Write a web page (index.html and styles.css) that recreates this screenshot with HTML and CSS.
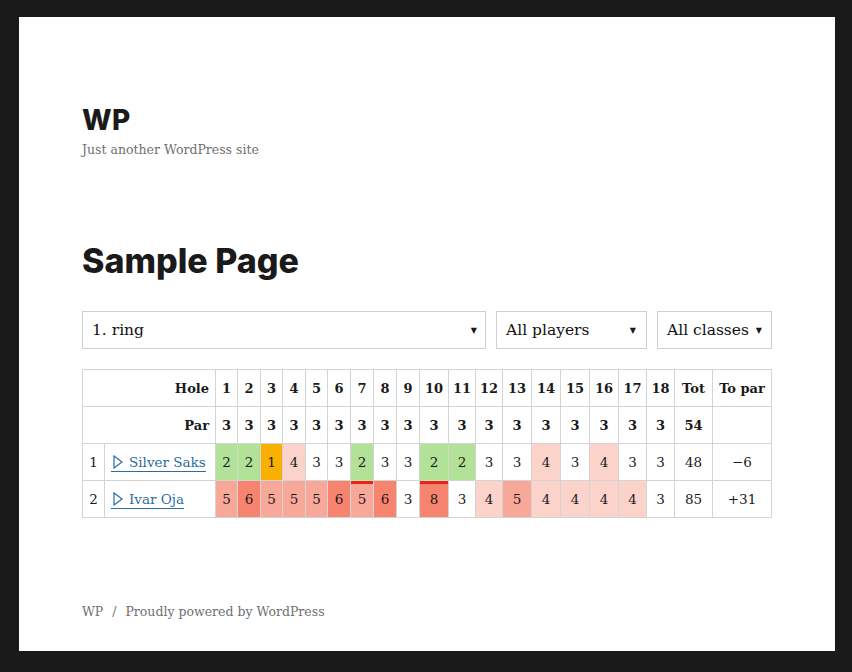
FILE: index.html
```html
<!DOCTYPE html>
<html>
<head>
<meta charset="utf-8">
<link rel="stylesheet" href="styles.css">
</head>
<body>
<div class="frame">
  <header class="site-header">
    <div class="site-title">WP</div>
    <div class="site-desc">Just another WordPress site</div>
  </header>
  <main class="content">
    <h1 class="page-title">Sample Page</h1>
    <div class="filters">
      <div class="select sel-round"><span>1. ring</span><span class="arrow">▼</span></div>
      <div class="select sel-players"><span>All players</span><span class="arrow">▼</span></div>
      <div class="select sel-classes"><span>All classes</span><span class="arrow">▼</span></div>
    </div>
    <table class="score">
      <colgroup>
        <col><col><col><col><col><col><col><col><col><col><col><col><col><col><col><col><col><col><col><col><col><col>
      </colgroup>
      <tr class="head">
        <th colspan="2" class="lbl">Hole</th>
        <th>1</th><th>2</th><th>3</th><th>4</th><th>5</th><th>6</th><th>7</th><th>8</th><th>9</th><th>10</th><th>11</th><th>12</th><th>13</th><th>14</th><th>15</th><th>16</th><th>17</th><th>18</th><th>Tot</th><th>To par</th>
      </tr>
      <tr class="head">
        <th colspan="2" class="lbl">Par</th>
        <th>3</th><th>3</th><th>3</th><th>3</th><th>3</th><th>3</th><th>3</th><th>3</th><th>3</th><th>3</th><th>3</th><th>3</th><th>3</th><th>3</th><th>3</th><th>3</th><th>3</th><th>3</th><th>54</th><th></th>
      </tr>
      <tr>
        <td class="rank">1</td>
        <td class="name"><a href="#"><svg class="tri" width="10" height="14" viewBox="0 0 10 14"><path d="M1 1 L9 7 L1 13 Z" fill="none" stroke="#2b6ca3" stroke-width="1.2" stroke-linejoin="miter"/></svg>Silver Saks</a></td>
        <td class="m1">2</td><td class="m1">2</td><td class="m2">1</td><td class="p1">4</td><td>3</td><td>3</td><td class="m1">2</td><td>3</td><td>3</td><td class="m1">2</td><td class="m1">2</td><td>3</td><td>3</td><td class="p1">4</td><td>3</td><td class="p1">4</td><td>3</td><td>3</td><td>48</td><td>−6</td>
      </tr>
      <tr>
        <td class="rank">2</td>
        <td class="name"><a href="#"><svg class="tri" width="10" height="14" viewBox="0 0 10 14"><path d="M1 1 L9 7 L1 13 Z" fill="none" stroke="#2b6ca3" stroke-width="1.2" stroke-linejoin="miter"/></svg>Ivar Oja</a></td>
        <td class="p2">5</td><td class="p3">6</td><td class="p2">5</td><td class="p2">5</td><td class="p2">5</td><td class="p3">6</td><td class="p2 flag">5</td><td class="p3">6</td><td>3</td><td class="p3 flag">8</td><td>3</td><td class="p1">4</td><td class="p2">5</td><td class="p1">4</td><td class="p1">4</td><td class="p1">4</td><td class="p1">4</td><td>3</td><td>85</td><td>+31</td>
      </tr>
    </table>
  </main>
  <footer class="site-footer">WP <span class="sep">/</span> Proudly powered by WordPress</footer>
</div>
</body>
</html>
```

FILE: styles.css
```css
html, body {
  margin: 0;
  padding: 0;
  background: #1a1a1a;
}
.frame {
  margin: 17px 17px 0 19px;
  width: 816px;
  height: 634px;
  background: #fff;
  box-sizing: border-box;
  padding: 85px 0 0 63px;
  font-family: "DejaVu Serif", serif;
  color: #333;
}
.site-title {
  font-family: Inter, "DejaVu Sans", sans-serif;
  font-weight: 800;
  font-size: 28px;
  line-height: 36px;
  color: #1a1a1a;
  letter-spacing: 0.3px;
}
.site-desc {
  margin-top: 3px;
  font-size: 12.5px;
  line-height: 18px;
  color: #707070;
}
.page-title {
  margin: 80px 0 0 0;
  font-family: Inter, "DejaVu Sans", sans-serif;
  font-weight: 800;
  font-size: 34px;
  line-height: 44px;
  color: #1a1a1a;
  letter-spacing: 0;
}
.filters {
  display: flex;
  gap: 10px;
  margin-top: 28px;
}
.select {
  box-sizing: border-box;
  height: 38px;
  border: 1px solid #cfcfcf;
  display: flex;
  align-items: center;
  justify-content: space-between;
  padding: 0 8px 0 9px;
  font-size: 15.5px;
  color: #111;
}
.sel-round { width: 404px; }
.sel-players { width: 151px; padding-right: 10px; }
.sel-classes { width: 115px; padding-right: 9px; }
.arrow {
  font-size: 8px;
  color: #1a1a1a;
}
.score {
  margin-top: 20px;
  border-collapse: collapse;
  table-layout: fixed;
  width: 689px;
  font-size: 13px;
  color: #1a1a1a;
}
.score col:nth-child(1) { width: 22px; }
.score col:nth-child(2) { width: 111px; }
.score col:nth-child(3) { width: 22px; }
.score col:nth-child(4) { width: 23px; }
.score col:nth-child(5) { width: 22px; }
.score col:nth-child(6) { width: 23px; }
.score col:nth-child(7) { width: 22px; }
.score col:nth-child(8) { width: 23px; }
.score col:nth-child(9) { width: 23px; }
.score col:nth-child(10) { width: 23px; }
.score col:nth-child(11) { width: 23px; }
.score col:nth-child(12) { width: 29px; }
.score col:nth-child(13) { width: 27px; }
.score col:nth-child(14) { width: 27px; }
.score col:nth-child(15) { width: 29px; }
.score col:nth-child(16) { width: 29px; }
.score col:nth-child(17) { width: 29px; }
.score col:nth-child(18) { width: 29px; }
.score col:nth-child(19) { width: 28px; }
.score col:nth-child(20) { width: 28px; }
.score col:nth-child(21) { width: 38px; }
.score col:nth-child(22) { width: 59px; }
.score th, .score td {
  border: 1px solid #d4d4d4;
  height: 37px;
  padding: 0;
  text-align: center;
  vertical-align: middle;
  box-sizing: border-box;
}
.score td {
  font-size: 13.5px;
}
.score th {
  font-weight: bold;
}
.score th.lbl {
  text-align: right;
  padding-right: 6px;
}
.score td.name {
  text-align: left;
  padding-left: 6px;
}
.score a {
  color: #2b6ca3;
  text-decoration: none;
  border-bottom: 1px solid #2b6ca3;
  padding-bottom: 1px;
  font-size: 13.5px;
}
.tri {
  vertical-align: -2px;
  margin: 0 6px 0 2px;
}
.score .m2 { background: #f9b000; }
.score .m1 { background: #b2e298; }
.score .p1 { background: #fbd3cb; }
.score .p2 { background: #f8a898; }
.score .p3 { background: #f6846e; }
.score .flag { box-shadow: inset 0 3px 0 #e4280e; }
.site-footer {
  margin-top: 86px;
  font-size: 12.5px;
  color: #707070;
}
.sep {
  margin: 0 5px;
}
```
